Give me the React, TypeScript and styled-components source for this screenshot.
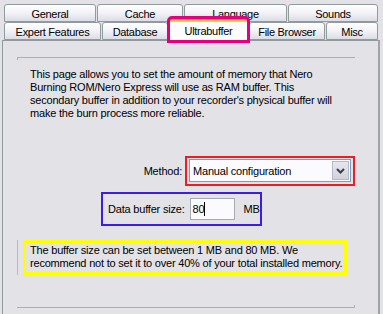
import React from "react";
import styled, { createGlobalStyle } from "styled-components";

const Global = createGlobalStyle`
  html, body {
    margin: 0;
    padding: 0;
    background: #e3e2e7;
  }
  body {
    font-family: "Liberation Sans", Arial, sans-serif;
    font-size: 11px;
    letter-spacing: -0.2px;
    color: #000;
  }
`;

const Window = styled.div`
  width: 383px;
  height: 314px;
  overflow: hidden;
  background: #e3e2e7;
  padding-top: 4px;
  box-sizing: border-box;
`;

const TabRow = styled.div`
  display: flex;
  gap: 1px;
  padding-left: 4px;
  height: 18px;
  align-items: flex-end;
`;

const Tab = styled.div<{ $w: number; $active?: boolean }>`
  width: ${({ $w }) => $w}px;
  height: ${({ $active }) => ($active ? 23 : 18)}px;
  box-sizing: border-box;
  display: flex;
  align-items: center;
  justify-content: center;
  letter-spacing: -0.3px;
  border: 1px solid #919b9c;
  border-bottom: ${({ $active }) => ($active ? "none" : "1px solid #919b9c")};
  border-radius: 3px 3px 0 0;
  background: ${({ $active }) =>
    $active
      ? "linear-gradient(#e68b2c 0, #e68b2c 1px, #ffc73c 1px, #ffc73c 3px, #fcfcfe 3px)"
      : "linear-gradient(#ffffff, #f4f4f8 45%, #dcdce6)"};
  padding-top: 1px;
  position: relative;
  z-index: ${({ $active }) => ($active ? 2 : 0)};
  margin-bottom: ${({ $active }) => ($active ? -1 : 0)}px;
  outline: ${({ $active }) => ($active ? "3px solid #e4007c" : "none")};
  outline-offset: ${({ $active }) => ($active ? -1 : 0)}px;
  white-space: nowrap;
`;

const Panel = styled.div`
  margin-left: 2px;
  width: 378px;
  height: 280px;
  box-sizing: border-box;
  border: 1px solid #919b9c;
  border-right: 2px solid #9ea5a6;
  background: #e3e2e7;
  padding: 16px 0 0 14px;
  position: relative;
  z-index: 1;
`;

const Frame = styled.div`
  width: 338px;
  height: 251px;
  box-sizing: border-box;
  border-top: 1px solid #aeaeb6;
  border-bottom: 1px solid #aeaeb6;
  position: relative;
  &::before,
  &::after {
    content: "";
    position: absolute;
    width: 1px;
    height: 2px;
    background: #aeaeb6;
  }
  &::before {
    left: 0;
    top: 0;
  }
  &::after {
    right: 0;
    bottom: 0;
  }
`;

const Intro = styled.div`
  padding: 10px 0 0 13px;
  line-height: 13px;
  white-space: nowrap;
`;

const MethodRow = styled.div`
  display: flex;
  justify-content: flex-end;
  align-items: center;
  gap: 3px;
  margin-top: 36px;
`;

const Mark = styled.div<{ $color: string; $size: number }>`
  border: ${({ $size }) => $size}px solid ${({ $color }) => $color};
  box-sizing: border-box;
`;

const RedMark = styled(Mark)`
  width: 170px;
  height: 30px;
  padding: 1px 0 0 2px;
`;

const Combo = styled.div`
  width: 162px;
  height: 23px;
  box-sizing: border-box;
  border: 1px solid #7f9db9;
  background: #fbfbff;
  display: flex;
  align-items: center;
  padding-left: 3px;
  padding-right: 1px;
  justify-content: space-between;
`;

const DropButton = styled.div`
  width: 17px;
  height: 19px;
  box-sizing: border-box;
  border: 1px solid #b5b8c8;
  background: linear-gradient(#e6e6ee, #d2d2dc);
  display: flex;
  align-items: center;
  justify-content: center;
`;

const BlueMark = styled(Mark)`
  width: 161px;
  height: 34px;
  margin: 6px 0 0 84px;
  display: flex;
  align-items: center;
  padding-left: 5px;
  white-space: nowrap;
`;

const Input = styled.div`
  width: 45px;
  height: 22px;
  flex-shrink: 0;
  box-sizing: border-box;
  border: 1px solid #a5acb5;
  background: #fbfbff;
  margin-left: 5px;
  display: flex;
  align-items: center;
  padding-left: 2px;
`;

const Caret = styled.span`
  display: inline-block;
  width: 1px;
  height: 14px;
  background: #000;
`;

const Unit = styled.span`
  margin-left: 9px;
`;

const InfoWrap = styled.div`
  margin-top: 14px;
  border-left: 1px solid #b8b8c0;
  padding-left: 5px;
  height: 35px;
`;

const YellowMark = styled(Mark)`
  width: 324px;
  height: 35px;
  padding: 1px 0 0 4px;
  line-height: 13px;
  white-space: nowrap;
`;

const top = [
  { label: "General", w: 92 },
  { label: "Cache", w: 86 },
  { label: "Language", w: 103 },
  { label: "Sounds", w: 90 },
];

const bottom = [
  { label: "Expert Features", w: 97 },
  { label: "Database", w: 66 },
  { label: "Ultrabuffer", w: 79, active: true },
  { label: "File Browser", w: 76 },
  { label: "Misc", w: 52 },
];

export default function App() {
  return (
    <>
      <Global />
      <Window>
        <TabRow>
          {top.map((t) => (
            <Tab key={t.label} $w={t.w}>
              {t.label}
            </Tab>
          ))}
        </TabRow>
        <TabRow>
          {bottom.map((t) => (
            <Tab key={t.label} $w={t.w} $active={t.active}>
              {t.label}
            </Tab>
          ))}
        </TabRow>
        <Panel>
          <Frame>
            <Intro>
              This page allows you to set the amount of memory that Nero
              <br />
              Burning ROM/Nero Express will use as RAM buffer. This
              <br />
              secondary buffer in addition to your recorder's physical buffer will
              <br />
              make the burn process more reliable.
            </Intro>
            <MethodRow>
              <span>Method:</span>
              <RedMark $color="#ee1c24" $size={2}>
                <Combo>
                  <span>Manual configuration</span>
                  <DropButton>
                    <svg width="9" height="6" viewBox="0 0 9 6">
                      <path
                        d="M1 1 L4.5 4.5 L8 1"
                        fill="none"
                        stroke="#3c3c46"
                        strokeWidth="2"
                      />
                    </svg>
                  </DropButton>
                </Combo>
              </RedMark>
            </MethodRow>
            <BlueMark $color="#3a1ee6" $size={2}>
              <span>Data buffer size:</span>
              <Input>
                80
                <Caret />
              </Input>
              <Unit>MB</Unit>
            </BlueMark>
            <InfoWrap>
              <YellowMark $color="#ffff00" $size={3}>
                The buffer size can be set between 1 MB and 80 MB. We
                <br />
                recommend not to set it to over 40% of your total installed memory.
              </YellowMark>
            </InfoWrap>
          </Frame>
        </Panel>
      </Window>
    </>
  );
}
